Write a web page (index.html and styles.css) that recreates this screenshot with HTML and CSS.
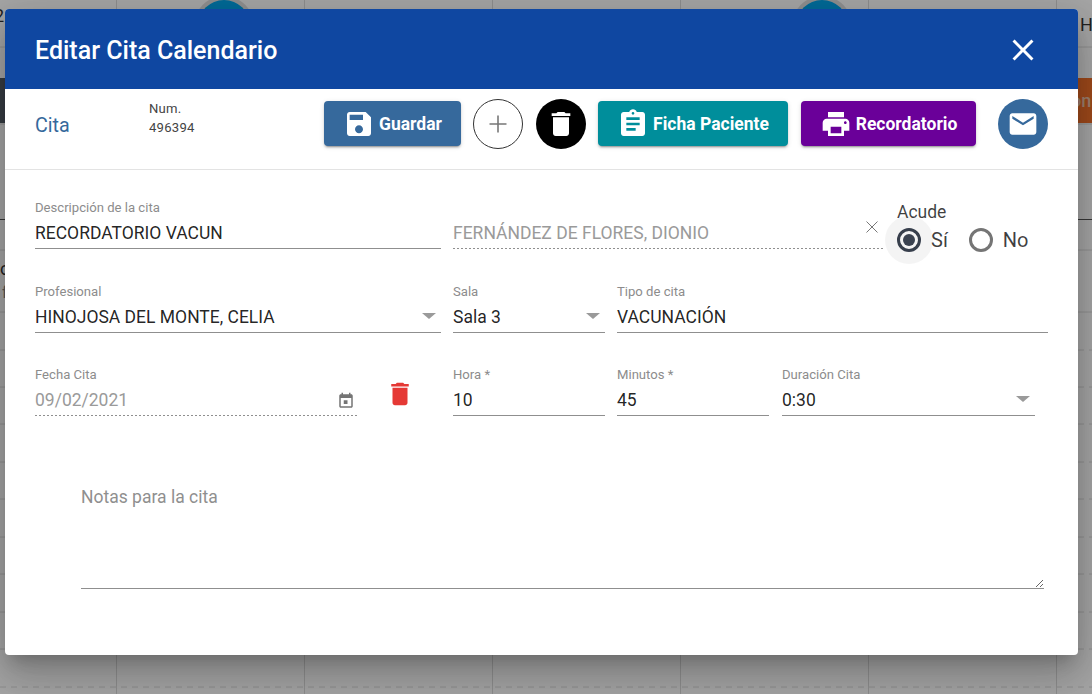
FILE: index.html
```html
<!DOCTYPE html>
<html lang="es">
<head>
<meta charset="utf-8">
<title>Editar Cita Calendario</title>
<link rel="stylesheet" href="styles.css">
</head>
<body>
<svg class="calendar" width="1092" height="694" viewBox="0 0 1092 694" aria-hidden="true">
  <circle class="halo" cx="224" cy="26" r="30"/>
  <circle class="halo" cx="822" cy="26" r="30"/>
  <circle class="bubble" cx="224" cy="26" r="26"/>
  <circle class="bubble" cx="822" cy="26" r="26"/>
  <rect class="dark" x="0" y="78" width="6" height="45"/>
  <rect class="orange" x="1070" y="78" width="22" height="45"/>
  <text class="cal-text" x="1080" y="31">H</text>
  <text class="cal-text" x="-6" y="22">2</text>
  <text class="cal-text" x="0" y="275">c</text>
  <text class="cal-text faint" x="2" y="298">f</text>
  <text class="cal-text on" x="1071" y="107">on</text>
  <path class="solid" d="M0 47H1092M0 124H1092M0 250H1092M0 312H1092"/>
  <path class="strong" d="M0 219.500H1092"/>
  <path class="dash" d="M0 350H1092M0 387H1092M0 424H1092M0 462H1092M0 499H1092M0 537H1092M0 574H1092M0 612H1092M0 649H1092M0 687H1092"/>
  <path class="solid" d="M116.500 0V694M304.500 0V694M492.500 0V694M680.500 0V694M868.500 0V694M1056.500 0V694"/>
</svg>
<div class="scrim"></div>

<section class="modal">
  <header class="modal-head">
    <h1 class="modal-title">Editar Cita Calendario</h1>
    <svg class="close-icon" viewBox="0 0 24 24"><path d="M19 6.410L17.590 5 12 10.590 6.410 5 5 6.410 10.590 12 5 17.590 6.410 19 12 13.410 17.590 19 19 17.590 13.410 12z"/></svg>
  </header>

  <div class="toolbar">
    <div class="tab-name">Cita</div>
    <div class="cita-num"><span>Num.</span><span>496394</span></div>
    <div class="actions">
      <button class="btn btn-blue">
        <svg class="btn-icon" viewBox="0 0 24 24"><path d="M17 3H5c-1.110 0-2 .9-2 2v14c0 1.100.89 2 2 2h14c1.100 0 2-.9 2-2V7l-4-4zm-5 16c-1.660 0-3-1.340-3-3s1.340-3 3-3 3 1.340 3 3-1.340 3-3 3zm3-10H5V5h10v4z"/></svg>
        Guardar
      </button>
      <button class="round round-outline">
        <svg class="plus-icon" viewBox="0 0 20 20"><path d="M10 1.500V18.500M1.500 10H18.500"/></svg>
      </button>
      <button class="round round-black">
        <svg class="round-icon" viewBox="0 0 24 24"><path d="M6 19c0 1.100.9 2 2 2h8c1.100 0 2-.9 2-2V7H6v12zM19 4h-3.500l-1-1h-5l-1 1H5v2h14V4z"/></svg>
      </button>
      <button class="btn btn-teal">
        <svg class="btn-icon" viewBox="0 0 24 24"><path d="M19 3h-4.180C14.400 1.840 13.300 1 12 1c-1.300 0-2.400.84-2.820 2H5c-1.100 0-2 .9-2 2v14c0 1.100.9 2 2 2h14c1.100 0 2-.9 2-2V5c0-1.100-.9-2-2-2zm-7 0c.55 0 1 .45 1 1s-.45 1-1 1-1-.45-1-1 .45-1 1-1zm2 14H7v-2h7v2zm3-4H7v-2h10v2zm0-4H7V7h10v2z"/></svg>
        Ficha Paciente
      </button>
      <button class="btn btn-purple">
        <svg class="btn-icon" viewBox="0 0 24 24"><path d="M19 8H5c-1.660 0-3 1.340-3 3v6h4v4h12v-4h4v-6c0-1.660-1.340-3-3-3zm-3 11H8v-5h8v5zm3-7c-.55 0-1-.45-1-1s.45-1 1-1 1 .45 1 1-.45 1-1 1zm-1-9H6v4h12V3z"/></svg>
        Recordatorio
      </button>
      <button class="round round-blue">
        <svg class="round-icon" viewBox="0 0 24 24"><path d="M20 4H4c-1.100 0-1.990.9-1.990 2L2 18c0 1.100.9 2 2 2h16c1.100 0 2-.9 2-2V6c0-1.100-.9-2-2-2zm0 4l-8 5-8-5V6l8 5 8-5v2z"/></svg>
      </button>
    </div>
  </div>

  <form class="form">
    <div class="row row-first">
      <div class="field w-desc">
        <div class="label">Descripción de la cita</div>
        <div class="value">RECORDATORIO VACUN</div>
      </div>
      <div class="field field-off w-patient">
        <div class="label label-empty">&nbsp;</div>
        <div class="value">FERNÁNDEZ DE FLORES, DIONIO
          <svg class="clear-icon" viewBox="0 0 12 12"><path d="M.5.500L11.500 11.500M11.500.500L.5 11.500"/></svg>
        </div>
      </div>
      <div class="attend">
        <div class="attend-title">Acude</div>
        <div class="attend-options">
          <span class="radio radio-on"></span><span class="radio-text">Sí</span>
          <span class="radio"></span><span class="radio-text">No</span>
        </div>
      </div>
    </div>

    <div class="row">
      <div class="field w-desc">
        <div class="label">Profesional</div>
        <div class="value">HINOJOSA DEL MONTE, CELIA<i class="caret"></i></div>
      </div>
      <div class="field w-short">
        <div class="label">Sala</div>
        <div class="value">Sala 3<i class="caret"></i></div>
      </div>
      <div class="field w-type">
        <div class="label">Tipo de cita</div>
        <div class="value">VACUNACIÓN</div>
      </div>
    </div>

    <div class="row">
      <div class="field field-off w-date">
        <div class="label">Fecha Cita</div>
        <div class="value">09/02/2021
          <svg class="cal-icon" viewBox="0 0 24 24"><path d="M19 3h-1V1h-2v2H8V1H6v2H5c-1.110 0-1.990.9-1.990 2L3 19c0 1.100.89 2 2 2h14c1.100 0 2-.9 2-2V5c0-1.100-.9-2-2-2zm0 16H5V8h14v11zM9 11h5v5H9z"/></svg>
        </div>
      </div>
      <div class="date-clear">
        <svg class="red-trash" viewBox="0 0 24 24"><path d="M6 19c0 1.100.9 2 2 2h8c1.100 0 2-.9 2-2V7H6v12zM19 4h-3.500l-1-1h-5l-1 1H5v2h14V4z"/></svg>
      </div>
      <div class="field w-short">
        <div class="label">Hora *</div>
        <div class="value">10</div>
      </div>
      <div class="field w-short">
        <div class="label">Minutos *</div>
        <div class="value">45</div>
      </div>
      <div class="field w-dur">
        <div class="label">Duración Cita</div>
        <div class="value">0:30<i class="caret"></i></div>
      </div>
    </div>

    <textarea class="notes" aria-label="Notas para la cita">Notas para la cita</textarea>
  </form>
</section>
</body>
</html>
```

FILE: styles.css
```css
* { box-sizing: border-box; }
html, body { margin: 0; height: 100%; }
body {
  width: 1092px;
  height: 694px;
  overflow: hidden;
  background: #fff;
  font-family: Roboto, "Liberation Sans", sans-serif;
  color: rgba(0, 0, 0, .87);
  position: relative;
}

/* page behind the dialog */
.calendar { position: absolute; left: 0; top: 0; }
.solid { stroke: #dcdcdc; stroke-width: 1; fill: none; }
.strong { stroke: #555; stroke-width: 1; fill: none; }
.dash { stroke: #dcdcdc; stroke-width: 1; stroke-dasharray: 6 5; fill: none; }
.bubble { fill: #00a3ea; }
.halo { fill: #ddd; }
.dark { fill: #555c68; }
.orange { fill: #f4712a; }
.cal-text { font-size: 18px; font-family: Roboto, sans-serif; fill: #333; }
.cal-text.faint { fill: #888; font-size: 16px; }
.cal-text.on { fill: #f2c4a8; font-weight: 500; }

.scrim { position: absolute; inset: 0; background: rgba(0, 0, 0, .35); }

/* dialog */
.modal {
  position: absolute;
  left: 5px;
  top: 9px;
  width: 1073px;
  height: 646px;
  background: #fff;
  border-radius: 4px;
  overflow: hidden;
  box-shadow: 0 11px 15px -7px rgba(0, 0, 0, .2), 0 24px 38px 3px rgba(0, 0, 0, .14), 0 9px 46px 8px rgba(0, 0, 0, .12);
}

.modal-head {
  height: 80px;
  background: #0f47a1;
  color: #fff;
  display: flex;
  align-items: center;
  justify-content: space-between;
  padding: 2px 37px 0 30px;
}
.modal-title { margin: 0; font-size: 25px; font-weight: 500; letter-spacing: 0; }
.close-icon { width: 36px; height: 36px; fill: #fff; }

.toolbar {
  height: 81px;
  border-bottom: 1px solid #e3e3e3;
  display: flex;
  align-items: center;
  padding: 0 30px;
}
.tab-name { width: 114px; font-size: 19.700px; color: #36699c; margin-top: -8px; }
.cita-num { display: flex; flex-direction: column; font-size: 13.125px; line-height: 19px; color: #444; margin-top: -23px; letter-spacing: .25px; }
.actions { margin-left: auto; display: flex; align-items: center; height: 100%; margin-top: -10px; }

.btn {
  height: 45px;
  border: 0;
  border-radius: 4px;
  color: #fff;
  font-family: inherit;
  font-size: 17.5px;
  font-weight: 700;
  display: flex;
  align-items: center;
  justify-content: center;
  padding: 0;
  margin-top: -1px;
  box-shadow: 0 3px 1px -2px rgba(0, 0, 0, .2), 0 2px 2px 0 rgba(0, 0, 0, .14), 0 1px 5px 0 rgba(0, 0, 0, .12);
}
.btn-icon { width: 32px; height: 32px; fill: #fff; margin-right: 4px; }
.btn-blue { width: 137px; background: #36699c; }
.btn-teal { width: 190px; background: #008e9b; margin-left: 12px; }
.btn-purple { width: 175px; background: #6a0099; margin-left: 13px; }

.round {
  width: 50px;
  height: 50px;
  border-radius: 50%;
  border: 0;
  padding: 0;
  display: flex;
  align-items: center;
  justify-content: center;
  flex: none;
}
.round-outline { background: #fff; border: 1px solid #333; margin-left: 12px; }
.round-black { background: #000; margin-left: 13px; }
.round-blue { background: #36699c; margin-left: 22px; }
.round-icon { width: 32px; height: 32px; fill: #fff; }
.plus-icon { width: 20px; height: 20px; stroke: #777; stroke-width: 1.600; fill: none; }

/* form */
.form { padding: 30px 30px 0; }
.row { display: flex; gap: 12px; align-items: flex-start; margin-top: 34px; }
.row-first { margin-top: 0; height: 50px; }

.field { flex: none; height: 49px; border-bottom: 1px solid #8f8f8f; }
.field-off {
  border-bottom: 1px solid transparent;
  background: linear-gradient(to right, #8f8f8f 0, #8f8f8f 50%, transparent 50%) left bottom -1px / 4px 1px repeat-x;
  background-origin: border-box;
  background-clip: border-box;
  background-position: left bottom;
}
.label { font-size: 13.125px; line-height: 16px; color: #8c8c8c; height: 16px; }
.value {
  position: relative;
  font-size: 17.5px;
  line-height: 24px;
  margin-top: 5px;
  color: rgba(0, 0, 0, .87);
}
.field-off .value { color: #9a9a9a; }

.w-desc { width: 406px; }
.w-patient { width: 432px; }
.w-short { width: 152px; }
.w-type { width: 431px; }
.w-date { width: 322px; }
.w-dur { width: 253px; margin-left: 1px; }

.caret {
  position: absolute;
  right: 5px;
  top: 8px;
  width: 0;
  height: 0;
  border-left: 7px solid transparent;
  border-right: 7px solid transparent;
  border-top: 6px solid #9a9a9a;
}
.clear-icon { position: absolute; right: 7px; top: 0; width: 12px; height: 12px; stroke: #777; stroke-width: 1; fill: none; }
.cal-icon { position: absolute; right: 2px; top: 4px; width: 18px; height: 18px; fill: #757575; }

.date-clear { width: 72px; flex: none; display: flex; padding: 12px 0 0 16px; }
.red-trash { width: 30px; height: 30px; fill: #e53935; }

.attend-title { font-size: 17.5px; line-height: 20px; margin-top: 2px; color: rgba(0, 0, 0, .75); }
.attend-options { display: flex; align-items: center; font-size: 20px; height: 28px; color: rgba(0, 0, 0, .75); margin-top: 4px; }
.radio {
  position: relative;
  width: 24px;
  height: 24px;
  border-radius: 50%;
  border: 3px solid #757575;
  flex: none;
}
.radio-on { border-color: #3a4250; }
.radio-on::before {
  content: "";
  position: absolute;
  left: -15px;
  top: -15px;
  width: 48px;
  height: 48px;
  border-radius: 50%;
  background: rgba(0, 0, 0, .045);
}
.radio-on::after {
  content: "";
  position: absolute;
  left: 3px;
  top: 3px;
  width: 12px;
  height: 12px;
  border-radius: 50%;
  background: #3a4250;
}
.radio-text { margin: 0 21px 0 10px; }

.notes {
  display: block;
  width: 963px;
  height: 119px;
  margin: 54px 0 0 46px;
  padding: 17px 0 0;
  border: 0;
  border-bottom: 1px solid #8f8f8f;
  outline: 0;
  background: transparent;
  font-family: inherit;
  font-size: 17.5px;
  line-height: 20px;
  color: #8f8f8f;
}
```
